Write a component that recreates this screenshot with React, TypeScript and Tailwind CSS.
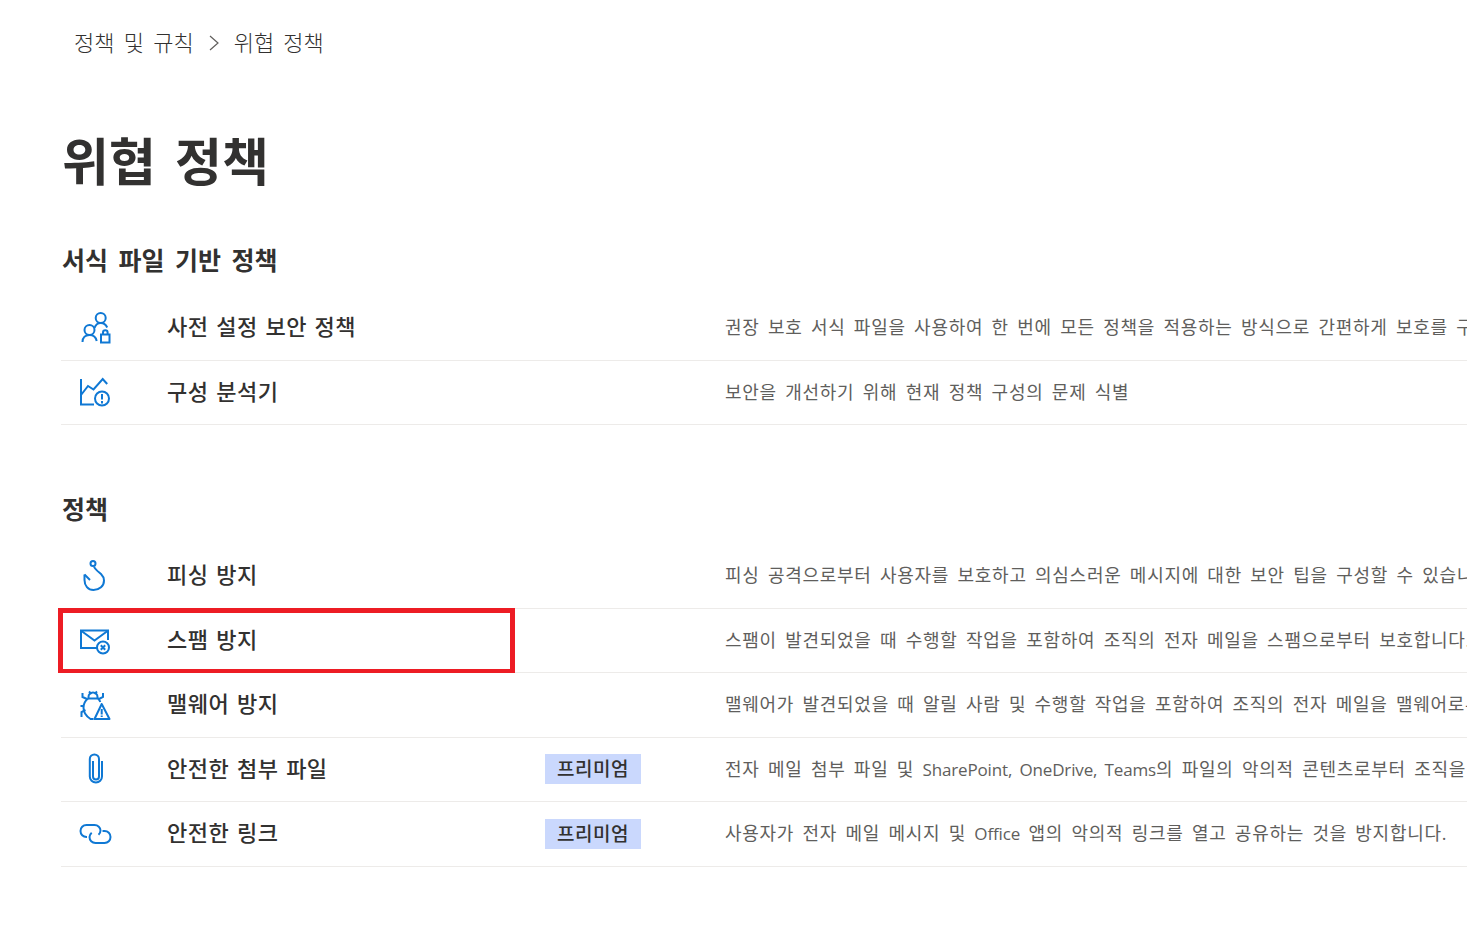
const fontClass = "font-['Open_Sans','Noto_Sans_CJK_KR',sans-serif]";

function SvgIcon({ children }: { children: React.ReactNode }) {
  return (
    <svg
      width="34"
      height="34"
      viewBox="0 0 34 34"
      fill="none"
      stroke="#0f78d4"
      strokeWidth="2"
    >
      {children}
    </svg>
  );
}

const PresetIcon = () => (
  <SvgIcon>
    <circle cx="21.700" cy="7" r="5" />
    <path d="M15.500 17c1-3 3.200-5 6.200-5 3 0 5.300 1.800 6.500 4.500" />
    <circle cx="10.500" cy="19" r="5" />
    <path d="M3.500 31c0-4.500 3-7 7-7s6.500 2.500 7.200 6" />
    <rect x="22" y="23.500" width="8.500" height="8" />
    <path d="M24 23.500V21.500a2.300 2.300 0 0 1 4.600 0v2" />
  </SvgIcon>
);

const AnalyzerIcon = () => (
  <SvgIcon>
    <path d="M2 4v25.500h13" />
    <path d="M2 20l7-9 5.500 3.500L23.700 4l4.500 5" />
    <circle cx="23" cy="23.500" r="7" />
    <path d="M23 19v5.500M23 26v2.500" />
  </SvgIcon>
);

const HookIcon = () => (
  <SvgIcon>
    <circle cx="14" cy="4.500" r="2.500" />
    <path d="M15 7.500c1 3 4 5 7 7.500 2 2 3 4 3 6.500 0 5.500-4.500 9.500-10.500 9.500C9 31 5.500 26.500 5.500 21v-5.500" />
    <path d="M5.500 15.500l5.500 5.500" />
  </SvgIcon>
);

const MailIcon = () => (
  <SvgIcon>
    <path d="M18 25H2V7.500h27V17" />
    <path d="M2.500 8l13 9.500L28.500 8" />
    <circle cx="24" cy="24.500" r="6" />
    <path d="M21.800 22.300l4.400 4.400M26.200 22.300l-4.400 4.400" />
  </SvgIcon>
);

const BugIcon = () => (
  <SvgIcon>
    <path d="M9 10.500c-3 2.500-4.500 5.500-4.500 9 0 5 3 9 7 11.500h3" />
    <path d="M9 10.500h10c1 1 1.800 2 2.300 3.500" />
    <path d="M9.500 10.500V9a4.500 4.500 0 0 1 9 0v1.500" />
    <path d="M10 3.500l2.500 2.500M18 3.500L15.500 6" />
    <path d="M8 11L3.500 9V5M20 11l4-2V5M5 18H1.500M2.500 29v-5l4-2" />
    <path d="M22.700 16L15.500 31h15z" strokeLinejoin="round" />
    <path d="M22.700 21v5.500M22.700 27.500v1.500" />
  </SvgIcon>
);

const ClipIcon = () => (
  <SvgIcon>
    <path d="M23 9v15.500a6.100 6.100 0 0 1-12.200 0V7a4.600 4.600 0 0 1 9.200 0v17.500a3 3 0 0 1-6 0V9" />
  </SvgIcon>
);

const LinkIcon = () => (
  <SvgIcon>
    <path d="M8 20H7.500C4 20 1.500 17.200 1.500 14S4 8 7.500 8h8c3.500 0 6 2.600 6 5.500 0 1.700-.8 3.200-2 4.200" />
    <path d="M23.500 14h2c3.500 0 6 2.700 6 6s-2.500 6-6 6h-9c-3.500 0-6-2.700-6-6 0-1.800 1-3.300 2.200-4.300" />
  </SvgIcon>
);

// latin words run narrower than the hangul around them
function Latin({ children }: { children: React.ReactNode }) {
  return <span className="text-[17px] tracking-[-0.15px]">{children}</span>;
}

type RowProps = {
  icon: React.ReactNode;
  title: string;
  desc: React.ReactNode;
  premium?: boolean;
  highlight?: boolean;
};

function PolicyRow({ icon, title, desc, premium, highlight }: RowProps) {
  return (
    <div className="relative flex h-[64.5px] items-center border-b border-[#edebe9]">
      <div className="flex w-[106px] shrink-0 pl-[18px]">{icon}</div>
      <div className="mb-[2px] w-[378px] shrink-0 text-[22px] font-medium tracking-[0.5px] text-[#323130] [word-spacing:1.5px]">
        {title}
      </div>
      <div className="w-[180px] shrink-0">
        {premium && (
          <span className="flex h-[30px] w-[96px] items-center justify-center bg-[#cad8fd] text-[19px] font-medium tracking-[0.5px] text-[#323130]">
            프리미엄
          </span>
        )}
      </div>
      <div className="whitespace-nowrap text-[18px] tracking-[0.72px] text-[#605e5c] [word-spacing:3px]">
        {desc}
      </div>
      {highlight && (
        <div className="absolute -top-[1px] left-[-3px] h-[65px] w-[457px] border-[5px] border-b-4 border-[#ed1c24]" />
      )}
    </div>
  );
}

export default function App() {
  return (
    <div className={`h-[934px] w-[1467px] overflow-hidden bg-white pl-[61px] ${fontClass}`}>
      <nav className="mt-[28px] flex h-[28px] items-center pt-[1px] pl-[13px] text-[22px] font-light text-[#323130] [word-spacing:3.5px]">
        <span>정책 및 규칙</span>
        <svg className="mx-[14px]" width="12" height="18" viewBox="0 0 12 18" fill="none" stroke="#605e5c" strokeWidth="1.200">
          <path d="M2 2l8 7-8 7" />
        </svg>
        <span>위협 정책</span>
      </nav>

      <h1 className="mt-[69px] h-[72px] pl-[1px] text-[51px] leading-[72px] font-bold text-[#323130] [word-spacing:6px]">
        위협 정책
      </h1>

      <h2 className="mt-[45px] h-[36px] pl-[1px] text-[25px] leading-[36px] font-semibold text-[#323130] [word-spacing:4px]">
        서식 파일 기반 정책
      </h2>
      <div className="mt-[18px]">
        <PolicyRow
          icon={<PresetIcon />}
          title="사전 설정 보안 정책"
          desc="권장 보호 서식 파일을 사용하여 한 번에 모든 정책을 적용하는 방식으로 간편하게 보호를 구성합니다."
        />
        <PolicyRow
          icon={<AnalyzerIcon />}
          title="구성 분석기"
          desc="보안을 개선하기 위해 현재 정책 구성의 문제 식별"
        />
      </div>

      <h2 className="mt-[66px] h-[36px] pl-[1px] text-[25px] leading-[36px] font-semibold text-[#323130]">
        정책
      </h2>
      <div className="mt-[17px]">
        <PolicyRow
          icon={<HookIcon />}
          title="피싱 방지"
          desc="피싱 공격으로부터 사용자를 보호하고 의심스러운 메시지에 대한 보안 팁을 구성할 수 있습니다."
        />
        <PolicyRow
          icon={<MailIcon />}
          title="스팸 방지"
          desc="스팸이 발견되었을 때 수행할 작업을 포함하여 조직의 전자 메일을 스팸으로부터 보호합니다."
          highlight
        />
        <PolicyRow
          icon={<BugIcon />}
          title="맬웨어 방지"
          desc="맬웨어가 발견되었을 때 알릴 사람 및 수행할 작업을 포함하여 조직의 전자 메일을 맬웨어로부터 보호합니다."
        />
        <PolicyRow
          icon={<ClipIcon />}
          title="안전한 첨부 파일"
          desc={
            <>
              전자 메일 첨부 파일 및 <Latin>SharePoint, OneDrive, Teams</Latin>의 파일의 악의적 콘텐츠로부터 조직을 보호합니다.
            </>
          }
          premium
        />
        <PolicyRow
          icon={<LinkIcon />}
          title="안전한 링크"
          desc={
            <>
              사용자가 전자 메일 메시지 및 <Latin>Office</Latin> 앱의 악의적 링크를 열고 공유하는 것을 방지합니다.
            </>
          }
          premium
        />
      </div>
    </div>
  );
}
